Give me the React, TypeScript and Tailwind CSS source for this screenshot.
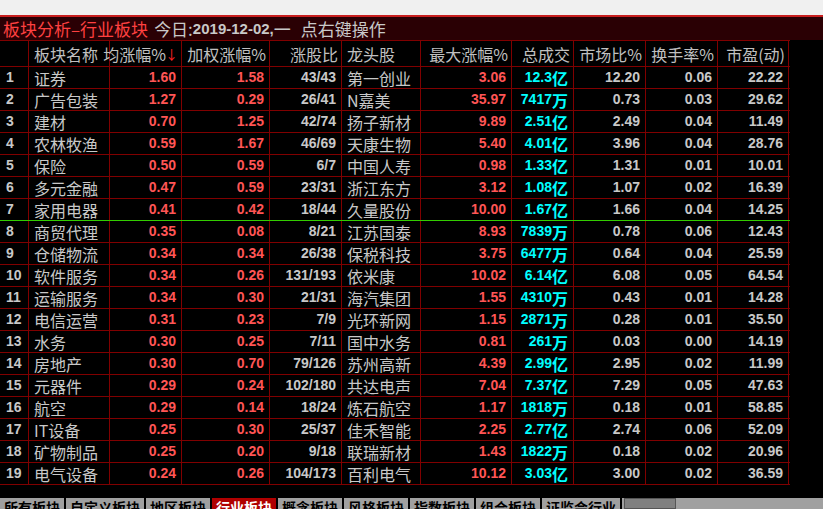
import React from "react";

const rows: string[][] = [
  ["1","证券","1.60","1.58","43/43","第一创业","3.06","12.3亿","12.20","0.06","22.22"],
  ["2","广告包装","1.27","0.29","26/41","N嘉美","35.97","7417万","0.73","0.03","29.62"],
  ["3","建材","0.70","1.25","42/74","扬子新材","9.89","2.51亿","2.49","0.04","11.49"],
  ["4","农林牧渔","0.59","1.67","46/69","天康生物","5.40","4.01亿","3.96","0.04","28.76"],
  ["5","保险","0.50","0.59","6/7","中国人寿","0.98","1.33亿","1.31","0.01","10.01"],
  ["6","多元金融","0.47","0.59","23/31","浙江东方","3.12","1.08亿","1.07","0.02","16.39"],
  ["7","家用电器","0.41","0.42","18/44","久量股份","10.00","1.67亿","1.66","0.04","14.25"],
  ["8","商贸代理","0.35","0.08","8/21","江苏国泰","8.93","7839万","0.78","0.06","12.43"],
  ["9","仓储物流","0.34","0.34","26/38","保税科技","3.75","6477万","0.64","0.04","25.59"],
  ["10","软件服务","0.34","0.26","131/193","依米康","10.02","6.14亿","6.08","0.05","64.54"],
  ["11","运输服务","0.34","0.30","21/31","海汽集团","1.55","4310万","0.43","0.01","14.28"],
  ["12","电信运营","0.31","0.23","7/9","光环新网","1.15","2871万","0.28","0.01","35.50"],
  ["13","水务","0.30","0.25","7/11","国中水务","0.81","261万","0.03","0.00","14.19"],
  ["14","房地产","0.30","0.70","79/126","苏州高新","4.39","2.99亿","2.95","0.02","11.99"],
  ["15","元器件","0.29","0.24","102/180","共达电声","7.04","7.37亿","7.29","0.05","47.63"],
  ["16","航空","0.29","0.14","18/24","炼石航空","1.17","1818万","0.18","0.01","58.85"],
  ["17","IT设备","0.25","0.30","25/37","佳禾智能","2.25","2.77亿","2.74","0.06","52.09"],
  ["18","矿物制品","0.25","0.20","9/18","联瑞新材","1.43","1822万","0.18","0.02","20.96"],
  ["19","电气设备","0.24","0.26","104/173","百利电气","10.12","3.03亿","3.00","0.02","36.59"],
];

const widths = [29,81,72,88,72,79,91,62,72,72,71];
const heads = ["","板块名称","均涨幅%","加权涨幅%","涨股比","龙头股","最大涨幅%","总成交","市场比%","换手率%","市盈(动)"];
const cjk = { fontFamily: '"Noto Sans CJK SC", sans-serif' };
const num = { fontFamily: '"Liberation Sans", "Noto Sans CJK SC", sans-serif' };
const tabs = ["所有板块","自定义板块","地区板块","行业板块","概念板块","风格板块","指数板块","组合板块","证监会行业"];

function colColor(i: number) {
  if (i === 2 || i === 3 || i === 6) return "text-[#ff5555]";
  if (i === 7) return "text-[#00ffff]";
  return "text-[#c8c8c8]";
}

export default function App() {
  return (
    <div className="w-[823px] h-[509px] bg-black overflow-hidden flex flex-col" style={num}>
      <div className="h-[15px] bg-[#f0f0f0]" />
      <div className="h-[2px] bg-[#c81e1e]" />
      <div className="h-[23px] bg-[#2a0004] flex items-center pl-[3px] text-[17px] leading-none whitespace-nowrap" style={cjk}>
        <span className="text-[#ff4040]">板块分析–行业板块</span>
        <span className="text-[#c8c8c8] ml-[6px]">今日:</span>
        <span className="text-[#c8c8c8] font-bold text-[15px]" style={num}>2019-12-02,</span>
        <span className="text-[#c8c8c8]">一</span>
        <span className="text-[#c8c8c8] ml-[10px]">点右键操作</span>
      </div>
      <div className="w-[790px] border-t border-[#800000]">
        <div className="flex h-[26px] border-b border-[#800000]">
          {heads.map((h, i) => (
            <div key={i} style={{ width: widths[i], ...cjk }}
              className={`shrink-0 border-r border-[#800000] flex items-center text-[16px] text-[#c0c0c0] whitespace-nowrap ${i===1||i===5?"pl-[5px]":"justify-end pr-[3px]"}`}>
              {h}{i===2 && <span className="text-[#ff2020] text-[13px] ml-[-1px]">↓</span>}
            </div>
          ))}
        </div>
        {rows.map((r, ri) => (
          <div key={ri} className={`flex h-[22px] border-b ${ri===6?"border-[#33cc00]":"border-[#800000]"}`}>
            {r.map((c, i) => {
              const isCjk = i===1||i===5;
              let content: React.ReactNode = c;
              if (i === 7) {
                const n = c.slice(0, -1), u = c.slice(-1);
                content = <><span className="font-bold text-[14px]" style={num}>{n}</span><span className="text-[16px]" style={cjk}>{u}</span></>;
              }
              return (
                <div key={i} style={{ width: widths[i], ...(isCjk ? cjk : num) }}
                  className={`shrink-0 border-r border-[#800000] flex items-center whitespace-nowrap ${colColor(i)} ${isCjk?"pl-[5px] text-[16px]":i===0?"pl-[6px] font-bold text-[14px]":"justify-end pr-[5px] font-bold text-[14px]"}`}>
                  {content}
                </div>
              );
            })}
          </div>
        ))}
      </div>
      <div className="h-[13px]" />
      <div className="flex h-[11px] bg-[#a0a0a0] items-start w-[823px]">
        <div className="flex items-start h-[11px] overflow-hidden">
          {tabs.map((t, i) => (
            <div key={i} className={`shrink-0 px-[4px] h-[20px] text-[14px] font-bold leading-[18px] border-r-2 border-black ${t==="行业板块"?"bg-[#b00000] text-white":"text-black"}`} style={cjk}>{t}</div>
          ))}
          <div className="shrink-0 w-[52px] h-[11px] border border-[#555] bg-[#808080] ml-[2px]" />
        </div>
      </div>
    </div>
  );
}
